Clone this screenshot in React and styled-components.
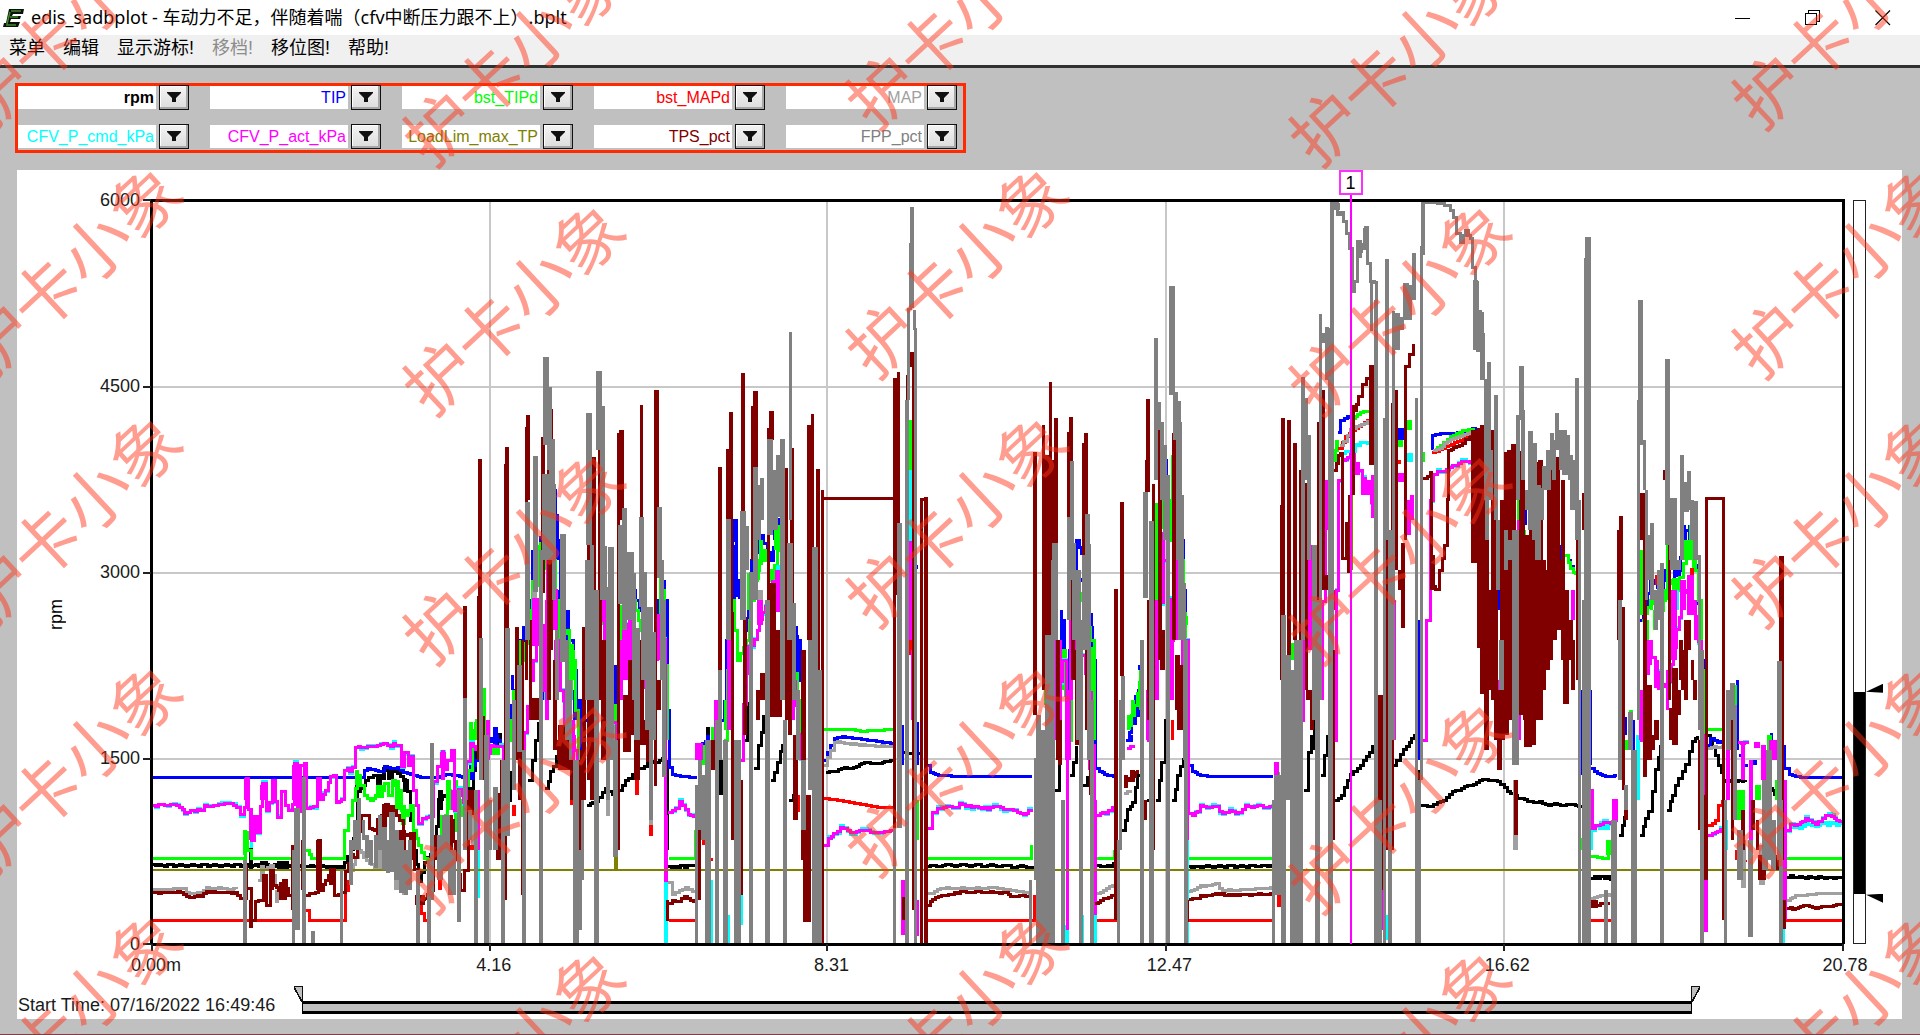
import React, { useState } from 'react'
import styled, { createGlobalStyle } from 'styled-components'

const cjk = '"Noto Sans CJK SC", sans-serif'

const GlobalStyle = createGlobalStyle`
  * {
    box-sizing: border-box;
  }
  body {
    margin: 0;
    background: #c0c0c0;
    font-family: "Liberation Sans", ${cjk};
  }
`

// plot space: x 151..1843, y 200..944
const LEFT = 151
const TOP = 200
const WIDTH = 1692
const HEIGHT = 744

const actLines =
  '152,805 170,803 182,808 184,811 200,811 204,806 230,804 236,808 240,812 244,808 246,778 248,810 251,840 254,815 257,830 260,805 262,785 266,810 269,800 272,778 275,800 277,818 281,790 285,805 288,810 292,805 294,765 297,812 300,765 304,762 306,810 313,805 317,778 320,800 325,790 330,775 333,775 336,803 341,800 344,770 352,768 355,748 360,745 370,747 380,744 390,745 398,745 401,765 404,750 408,765 411,758 413,790 418,822 422,817 429,818 433,780 437,765 441,755 444,770 447,760 451,748 454,810 458,790 463,800 466,760 470,745 475,748 480,744 485,760 490,745 500,747 503,760 504,830|520,760 524,730 530,680 536,640 540,690 547,560 552,590 556,640 560,690 568,720 574,750 579,850|590,720 600,600 605,640 612,720 616,780|620,600 626,650 632,660 640,680 650,700 657,620 661,640 665,820|668,812 675,808 679,802 685,808 690,816 696,820|740,760 746,650 754,640 762,610 770,600 778,580 784,620 792,680 800,760|824,845 828,840 833,832 840,828 850,830 870,832 893,830|928,828 932,812 940,808 955,806 962,804 990,808 1000,806 1010,810 1020,813 1031,812|1054,720 1062,660 1066,760 1071,620 1078,640 1088,690 1094,800|1097,815 1105,812 1115,805|1127,748 1133,745|1147,740 1156,640 1163,560 1170,640 1178,560 1184,640 1188,813|1188,813 1192,815 1200,806 1215,808 1222,812 1235,812 1245,806 1272,806 1276,765|1300,720 1306,600 1313,660 1318,700 1325,500|1333,740 1336,590 1338,480 1342,460 1350,455 1354,462 1358,470 1362,480 1368,490 1373,510|1422,740 1426,620 1430,500 1433,475 1440,470 1455,465 1472,459|1590,790 1592,826 1600,825 1610,822 1613,800 1616,822|1640,740 1648,640 1658,690 1668,680 1676,630 1684,590 1692,600 1698,640 1704,830|1708,835 1712,832 1720,830 1723,833|1738,742 1747,742|1786,830 1790,826 1797,823 1805,820 1815,822 1825,816 1842,820'

// lines: "x,y x,y|x,y ..."   bars: "x,width,top,bottom ..."
const channels = [
  {
    name: 'rpm',
    color: '#000000',
    bold: true,
    noise: 2,
    lines:
      '152,864 240,864 292,865 341,868 350,850 353,840 357,790 362,785 368,778 373,775 377,790 380,775 384,770 388,778 392,768 397,775 403,780 407,790 410,820 413,850 418,880 424,862 433,850 438,800 442,795 452,800 460,790 470,790 475,750 482,740|507,800 513,740 520,715|528,780 535,740 538,722|545,788 553,765 558,745|587,805 595,800 605,790 615,795 625,780 635,770 650,762 665,757|668,866 696,866|720,790 724,760|745,740 747,700|754,768 758,745 763,715|771,780 777,760 782,745|789,800 793,795|826,772 835,769 850,766 870,763 893,760|898,752 920,752|927,866 1032,865|1055,790 1059,760|1070,775 1076,745|1083,785 1090,765|1097,865 1116,864|1122,830 1127,810 1132,800 1137,775 1141,740|1147,800 1150,740|1156,800 1161,760 1165,720|1172,800 1177,775 1183,760|1188,866 1273,865|1304,790 1308,750 1314,720|1321,775 1327,735|1334,800 1341,795 1350,775 1360,765 1375,740|1393,765 1403,750 1414,733|1421,805 1430,806 1440,800 1455,790 1470,785 1485,779 1497,783 1507,790 1517,798 1530,800 1545,803 1575,804 1585,808|1591,878 1613,877|1619,835 1624,815|1640,835 1648,810 1655,770 1660,745|1667,810 1675,785 1685,765 1692,740 1697,735|1707,735 1712,745 1718,765 1723,780 1735,782 1745,782|1763,785 1783,800|1787,877 1842,877',
    bars: '251,4,848,870 283,12,861,870 264,8,861,870 357,4,780,800 384,4,767,780 392,4,768,778 405,4,778,792 440,5,790,810 452,5,790,810 500,4,733,745 520,3,710,730 667,3,760,850 708,4,727,740 720,5,760,795 734,4,740,780 1094,3,780,830 1150,3,740,800 1296,4,750,790 1315,4,700,750 1418,4,770,790',
  },
  {
    name: 'TIP',
    color: '#0000ff',
    noise: 0,
    lines:
      '152,777 360,777 364,770 367,768 375,770 381,771 384,766 390,768 397,767 403,772 410,774 420,777 436,777 445,774 455,775 462,777 470,770 475,760 480,750 494,735 500,745|506,720 513,690 520,640 530,600 537,555 547,500 552,490 557,540 562,640 570,640 576,700 580,780|586,720 592,640 600,590 606,640 614,690 616,740|620,610 632,590 642,620 650,660 658,600 664,600 667,710|667,710 669,767 672,774 680,776 697,777|699,745 705,740|722,720 729,560 734,520 736,580 744,630 751,560 760,535 770,560 779,520 786,600 796,640 803,720|824,760 827,752 830,745 834,738 842,736 855,738 870,740 893,743|927,765 930,772 938,775 960,776 1032,776|1054,680 1061,620 1066,720 1071,580 1076,540 1084,560 1092,660 1095,768|1095,768 1099,771 1107,775 1116,776|1126,740 1134,715 1141,665|1154,560 1162,460 1166,500|1172,480 1180,540 1188,690|1188,765 1192,771 1200,775 1210,776 1273,776|1338,432 1340,420 1347,416 1352,417|1431,448 1432,435 1440,433 1448,433 1460,432 1472,428 1478,435|1567,560 1573,572|1591,768 1597,773 1605,776 1617,775|1640,620 1650,580 1660,590 1668,560 1677,570 1685,530 1692,530 1698,600 1704,720|1706,745 1710,738 1717,742 1722,740|1739,755 1742,765 1748,765|1785,768 1789,774 1800,777 1842,777',
    bars: '472,6,750,780 495,5,727,745 508,3,710,740 512,3,675,690 520,3,640,680 533,4,550,580 545,4,664,700 552,3,490,530 557,3,537,560 559,3,590,620 568,4,610,640 575,4,690,720 578,3,700,770 615,3,665,740 631,4,587,600 659,3,600,610 664,3,580,600 665,3,612,710 708,4,735,745 724,3,700,720 734,3,545,600 736,3,572,597 751,3,560,570 760,5,534,545 776,6,520,540 779,3,518,540 797,3,635,700 802,3,690,720 902,3,725,765 916,3,565,569 917,3,722,765 1055,3,640,700 1061,3,610,635 1066,3,694,720 1076,4,550,570 1081,3,578,582 1091,3,613,660 1093,4,708,765 1131,3,735,742 1135,3,695,725 1140,4,665,670 1157,3,524,600 1162,4,466,490 1165,3,485,500 1182,3,540,584 1185,3,592,615 1187,3,683,760 1309,3,490,510 1330,4,445,460 1401,6,428,440 1418,3,620,760 1499,3,570,610 1509,3,560,590 1525,3,500,525 1536,3,540,580 1543,3,575,580 1561,3,545,560 1582,3,690,775 1590,3,690,765 1625,3,717,735 1633,3,720,760 1651,3,578,600 1674,3,530,580 1677,7,565,577 1684,4,525,540 1689,3,525,540 1698,3,590,605 1701,3,650,680 1704,4,700,740 1737,3,680,750 1755,4,760,765 1771,3,733,740 1784,3,745,770',
  },
  {
    name: 'bst_TIPd',
    color: '#00ff00',
    noise: 0,
    lines:
      '152,858 244,858 245,832 247,850 251,858 292,858|306,850 311,858 341,858 344,830 348,815 352,800 357,775 360,785 364,795 370,800 375,795 380,790 384,783 388,795 392,780 397,790 401,810 405,815 410,805 413,830 418,845 424,858 430,860 436,850 442,840 447,790 452,800 455,830 462,800 468,770 472,730 476,720 482,750|506,740 513,700 520,660 530,610 537,560 547,510 552,560 558,640 566,630 572,660 578,760|588,740 594,640 600,610 608,650 615,760|620,620 632,600 643,640 652,690 660,590 667,740|669,858 695,858 695,830|724,740 730,600 737,660 746,640 754,580 762,550 771,580 780,535 788,620 797,700 804,800|824,729 852,729 860,731 870,730 893,729|910,4 910,4|927,858 1031,858 1031,845|1056,720 1062,650 1067,740 1074,580 1082,600 1090,640 1094,740|1097,858 1114,858 1114,850|1128,725 1134,705 1142,670|1155,600 1163,490 1168,540 1173,460 1180,560 1188,720|1188,858 1272,858 1273,845|1332,460 1337,440|1352,418 1360,412 1370,410|1432,452 1440,445 1450,436 1462,430 1473,428|1565,555 1570,568 1575,575|1591,856 1605,858 1608,845 1612,830|1642,620 1650,600 1660,610 1668,580 1676,590 1686,550 1692,540 1698,600 1704,740|1707,729 1725,729|1786,858 1842,858',
    bars: '245,4,830,855 297,3,810,850 357,4,770,785 380,8,785,798 397,5,780,810 403,5,805,825 442,5,815,840 448,5,780,810 456,4,780,830 471,4,722,760 476,5,722,740 483,5,688,740 485,6,720,740 496,8,745,755 514,4,690,720 521,4,640,675 533,4,580,610 537,4,545,580 547,4,502,570 570,5,645,700 573,4,650,680 608,5,635,660 620,4,605,640 631,4,590,610 643,3,620,650 660,3,578,600 665,3,660,710 704,4,745,765 713,5,727,740 725,3,700,730 730,4,585,620 748,3,573,610 758,3,560,580 761,4,540,565 777,6,525,550 798,3,690,720 802,3,720,780 910,4,420,500 917,3,800,840 1045,3,680,705 1063,4,652,690 1066,3,720,740 1073,3,578,590 1091,3,647,700 1092,3,700,740 1141,5,670,710 1133,4,700,715 1129,4,715,730 1156,4,503,600 1163,4,487,520 1173,4,455,520 1186,3,616,625 1277,5,772,790 1292,3,643,660 1305,5,508,520 1309,3,500,530 1313,3,565,610 1337,4,440,450 1400,6,440,447 1409,6,420,430 1423,4,452,462 1510,3,580,610 1519,4,500,620 1524,3,530,545 1537,3,560,580 1543,3,580,600 1582,3,838,850 1608,5,840,855 1626,3,740,750 1631,4,710,730 1641,4,550,615 1647,4,620,645 1651,3,595,610 1655,4,610,630 1660,3,590,610 1667,3,545,600 1675,6,578,590 1686,6,540,560 1690,3,525,560 1694,4,545,570 1702,3,680,700 1735,3,685,710 1729,3,700,720 1741,8,790,820 1758,6,785,800 1764,4,800,820 1769,5,735,750 1776,3,780,800',
  },
  {
    name: 'bst_MAPd',
    color: '#ff0000',
    noise: 0,
    lines:
      '152,920 292,920|306,910 309,920 341,920 345,890 350,872|418,905 424,920 429,920|669,920 696,920|823,798 840,800 860,804 880,807 893,807|927,920 1033,920 1034,895|1097,920 1115,920 1115,898|1188,920 1273,920|1338,448 1345,436 1352,430 1370,418|1432,452 1445,446 1460,440 1473,432|1591,920 1612,920|1708,825 1715,820 1718,805 1722,800|1735,858 1745,862|1786,920 1842,920',
    bars: '246,3,890,900 302,3,845,890 440,4,860,890 472,5,845,850 498,4,845,855 514,4,805,816 556,3,670,700 572,4,780,805 637,4,780,795 651,4,825,836 656,3,690,710 703,3,830,845 710,6,858,861 798,3,795,812 911,4,640,655 1147,3,720,740 1172,3,720,740 1280,6,890,907 1398,6,460,464 1334,3,590,610 1656,3,575,585 1692,4,568,575 1737,4,850,860',
  },
  {
    name: 'MAP',
    color: '#a0a0a0',
    noise: 1,
    lines:
      '152,889 182,888 186,892 200,893 206,888 236,889|258,880 262,870 270,865 275,885 279,900|350,870 358,850 366,860 374,868 380,858 386,868|668,882 672,894 685,887 695,893|824,765 830,750 834,742 850,743 893,747|927,893 940,888 1000,887 1010,890 1032,893|1097,893 1115,884|1124,793 1130,790|1188,891 1200,886 1215,884 1222,890 1273,887|1340,445 1350,430 1370,419|1433,450 1450,440 1473,430|1591,898 1612,893|1708,748 1722,745|1787,900 1795,895 1842,892',
    bars: '262,5,865,880 277,4,890,903 379,5,850,870 396,5,860,890 404,5,870,895 473,5,800,845 534,5,590,610 608,4,790,816 651,4,780,825 760,5,590,610 1515,5,780,850 1557,5,430,450 1743,5,840,888 1762,6,845,885',
  },
  {
    name: 'CFV_P_cmd_kPa',
    color: '#00ffff',
    noise: 4,
    lines: actLines + '|1342,453 1352,448 1360,443 1370,444|1787,831 1805,826 1842,822',
    bars: '251,3,836,848 257,3,828,834 478,4,830,898 545,3,690,700 630,5,617,625 666,4,870,943 711,3,880,943 728,3,915,943 741,3,895,925 737,3,765,785 778,4,565,578 911,4,470,545 1042,3,900,925 1067,4,925,943 1082,3,915,943 1095,4,900,943 1183,3,635,670 1187,4,820,943 1322,3,495,520 1379,4,900,943 1386,4,915,940 1410,6,453,462 1591,3,828,850 1604,12,824,830 1638,4,735,800 1676,6,590,610 1726,3,820,850 1783,4,915,943',
  },
  {
    name: 'CFV_P_act_kPa',
    color: '#ff00ff',
    noise: 2,
    lines: actLines,
    bars: '246,4,778,800 251,4,810,840 262,5,785,800 295,6,765,800 304,3,762,800 443,4,750,780 455,8,790,810 478,3,790,850 488,4,720,760 520,6,720,735 535,7,598,646 547,4,600,720 553,6,540,630 556,4,640,700 566,6,690,730 573,4,720,760 578,4,790,859 588,3,700,760 602,6,680,700 605,4,595,650 612,4,670,720 620,5,640,700 626,8,630,680 632,8,620,670 650,4,680,710 659,5,614,660 666,4,815,882 699,8,743,760 716,4,700,770 729,4,640,730 737,4,780,860 747,4,645,675 760,6,600,625 773,4,580,620 779,8,570,612 793,4,650,720 822,3,850,930 910,4,541,640 912,3,650,720 904,6,880,935 917,4,900,936 1055,3,620,740 1060,4,640,730 1067,3,760,930 1071,4,620,700 1076,5,623,670 1089,3,670,770 1095,4,800,915 1120,3,740,800 1147,3,690,740 1157,4,600,700 1163,4,532,580 1172,4,620,700 1178,4,535,640 1183,4,610,720 1187,3,800,840 1276,5,762,775 1303,3,640,700 1310,4,545,650 1313,3,650,700 1326,4,480,530 1357,6,463,475 1366,10,480,495 1373,4,475,518 1380,5,890,930 1394,3,600,740 1400,10,473,482 1408,5,500,535 1412,4,495,520 1485,3,540,640 1498,3,680,735 1510,3,570,650 1519,4,520,740 1526,4,540,580 1536,3,590,650 1542,3,600,620 1561,3,580,620 1573,4,590,620 1586,3,700,770 1621,6,740,745 1634,4,750,840 1641,4,690,740 1649,6,645,665 1656,5,660,688 1667,3,670,710 1674,6,590,660 1683,6,580,610 1690,7,575,615 1696,5,615,640 1704,4,800,880 1706,4,880,932 1728,4,740,800 1743,4,742,780 1751,4,760,855 1757,6,742,748 1763,5,745,780 1774,10,740,760 1785,4,780,920',
  },
  {
    name: 'LoadLim_max_TP',
    color: '#808000',
    noise: 0,
    lines: '152,870 1842,870',
    bars: '616,4,857,870 1351,3,495,570',
  },
  {
    name: 'TPS_pct',
    color: '#800000',
    noise: 1,
    lines:
      '152,892 180,892 186,896 200,896 206,892 234,892 240,897 244,896|248,888 251,920 255,900 260,900 263,875 266,905 270,870 273,885 278,890 283,880 288,895 292,895|306,895 315,892 318,840 320,890 325,880 331,868 334,895 341,893 345,870 350,855 353,858 357,830 361,815 366,815 369,828 374,830 377,820 381,815 385,805 388,815 393,810 399,820 403,835 410,833 414,870 418,900 424,898 430,890 433,850 439,840 445,850 450,820 455,860 460,890 464,870 468,800|668,903 672,900 678,902 684,896 690,900 695,902|927,905 935,896 960,892 1005,892 1010,896 1031,896|1095,903 1100,900 1108,897 1114,893|1126,780 1132,775 1137,770|1189,899 1200,896 1215,894 1240,894 1273,893|1333,470 1338,455 1340,452 1342,558 1346,523 1348,573|1353,410 1358,396 1362,385 1366,377 1370,370|1405,540 1405,366 1409,355 1413,343|1423,478 1430,472 1431,585 1435,590 1439,570 1444,545 1447,500 1448,450 1453,448 1462,443 1472,433 1474,560|1592,906 1600,904 1610,903|1787,908 1795,908 1803,905 1815,907 1830,905 1842,904',
    bars: '858,72,497,500 923,5,498,501 1714,18,497,500 1706,3,497,880 1723,3,497,920 246,4,865,900 251,4,900,928 265,4,875,900 272,4,872,890 283,8,882,900 292,3,845,910 297,5,890,910 303,4,840,890 318,4,840,890 331,4,868,885 378,5,818,835 384,5,804,830 392,6,805,835 402,8,830,855 411,5,832,860 420,10,895,905 434,6,835,860 450,5,815,860 465,4,606,700 472,8,790,815 480,4,459,638 478,3,596,760 483,4,716,780 499,6,793,860 502,4,760,860 507,4,447,628 505,3,464,900 517,4,627,760 520,4,740,800 522,3,640,895 528,4,415,500 526,3,427,680 530,3,620,720 535,8,698,720 543,4,437,593 551,3,409,650 549,4,464,700 555,4,660,750 559,5,740,760 564,12,725,770 572,4,760,800 579,4,760,860 582,4,750,830 584,4,627,800 589,5,540,780 593,6,457,640 592,4,640,800 600,4,442,700 604,6,640,760 610,6,660,740 618,3,433,850 621,5,430,520 627,8,695,752 631,6,660,735 637,6,720,780 641,3,405,600 642,4,640,745 645,6,720,745 648,4,730,762 656,5,390,560 655,3,560,786 658,5,680,710 667,3,900,921 699,3,800,900 702,4,795,820 713,6,740,770 719,3,498,660 720,4,467,670 728,4,449,519 727,3,475,520 731,4,412,620 732,3,612,840 742,3,405,620 743,4,373,511 741,3,780,895 745,4,617,735 753,4,406,560 755,5,391,470 758,4,690,720 762,5,673,700 768,3,428,700 771,5,411,440 773,6,583,717 777,10,630,717 786,3,468,720 792,4,448,620 790,4,565,735 795,5,735,820 803,5,650,860 807,8,795,922 809,4,425,640 812,3,414,670 818,4,469,670 822,3,490,943 895,4,378,595 898,3,372,523 894,3,500,850 906,3,558,943 912,4,352,367 913,3,367,910 907,3,375,400 921,3,498,943 926,4,497,943 903,3,897,920 1035,4,452,715 1043,3,425,690 1050,3,382,640 1048,6,455,635 1053,5,460,560 1056,4,418,543 1058,4,640,760 1060,4,720,765 1068,3,432,517 1071,4,417,476 1073,4,580,680 1077,5,650,745 1083,3,443,555 1086,4,433,514 1087,4,593,730 1090,3,720,795 1042,3,810,910 1049,3,700,900 1116,4,589,920 1122,4,502,676 1126,4,775,788 1132,5,770,782 1146,3,460,492 1148,4,399,492 1145,3,800,820 1148,3,600,720 1153,3,484,850 1158,4,417,440 1160,4,435,660 1162,5,630,670 1174,4,433,640 1177,5,655,710 1180,6,665,730 1187,3,900,922 1281,3,505,680 1283,4,418,615 1289,4,420,655 1295,4,443,640 1300,3,470,650 1306,3,483,690 1308,4,690,700 1312,4,690,730 1318,3,422,750 1323,4,390,590 1326,4,575,590 1333,3,650,840 1349,3,495,573 1353,3,405,495 1372,6,365,465 1375,3,365,686 1380,5,695,890 1386,3,515,850 1392,3,403,850 1396,4,390,570 1400,5,570,590 1403,4,543,628 1416,3,830,927 1432,5,555,590 1475,8,430,563 1480,6,428,648 1482,5,425,694 1486,5,480,750 1490,6,590,690 1493,5,430,700 1496,4,540,740 1499,5,690,770 1502,5,500,740 1506,5,452,735 1509,5,450,720 1513,5,444,700 1516,4,780,835 1522,6,451,715 1525,5,600,720 1528,8,535,747 1532,7,530,745 1536,6,462,720 1540,5,460,720 1543,6,560,690 1547,5,570,670 1550,6,457,660 1554,5,460,640 1557,5,457,630 1560,5,560,630 1563,4,480,660 1566,6,590,704 1570,5,620,660 1573,4,640,690 1577,3,500,680 1583,3,493,530 1594,8,900,908 1618,3,530,640 1621,4,516,600 1623,3,607,790 1626,4,790,820 1634,3,840,870 1642,4,493,540 1644,3,493,620 1645,4,600,777 1649,5,685,760 1652,6,735,750 1656,5,720,740 1664,3,470,480 1669,3,506,700 1672,6,708,740 1675,6,668,745 1679,4,690,715 1681,4,640,680 1684,6,650,690 1686,4,620,700 1689,4,620,650 1692,3,660,680 1695,4,680,700 1699,3,740,830 1703,4,795,880 1732,3,718,840 1743,4,810,850 1753,4,800,830 1757,3,820,850 1762,8,855,880 1768,4,785,830 1777,5,855,870 1781,5,556,860 1784,4,900,929',
  },
  {
    name: 'FPP_pct',
    color: '#808080',
    noise: 2,
    lines:
      '1334,203 1337,212 1340,210 1343,220 1346,233 1349,248 1352,290 1354,280 1357,250 1361,245 1365,228 1367,262 1370,280 1374,283 1376,305|1424,202 1440,202 1447,206 1453,218 1456,233 1460,240 1465,232 1470,238 1472,265 1475,280 1477,350 1479,315 1482,350',
    bars: '245,4,860,943 293,3,850,943 297,6,808,930 304,4,777,943 313,4,931,943 341,3,870,943 351,4,840,885 355,4,820,850 359,4,798,850 363,3,820,840 367,4,835,858 371,4,840,865 376,4,835,868 380,4,815,850 384,5,827,870 388,4,840,873 392,6,812,872 396,5,830,880 401,5,840,893 406,4,850,895 410,4,840,890 418,4,870,943 429,4,860,943 432,4,743,900 440,6,835,880 446,8,815,870 452,8,850,895 459,4,790,922 465,4,698,850 470,4,810,840 476,4,790,943 481,4,638,780 486,5,735,943 490,3,800,850 495,5,787,850 503,4,760,943 507,5,628,836 514,4,700,790 519,5,665,752 524,4,750,943 527,5,502,640 535,5,456,592 541,4,550,943 546,6,357,445 549,5,387,470 545,7,474,560 552,6,439,560 554,4,484,600 557,4,630,700 563,6,534,662 567,4,640,740 570,3,680,760 576,6,760,943 580,4,850,930 582,3,800,880 587,5,560,700 589,6,413,545 592,4,545,700 596,5,590,943 599,6,371,450 602,5,406,600 605,4,546,600 608,4,587,800 611,6,547,760 615,5,740,857 620,4,525,604 624,5,508,630 630,8,552,620 634,4,573,700 637,6,628,740 641,5,517,607 644,6,572,680 648,6,607,730 651,4,607,820 653,5,632,740 659,5,507,578 662,4,560,680 664,4,600,777 696,3,785,943 700,4,760,830 703,5,775,840 708,6,740,943 717,4,720,943 720,4,670,760 725,5,740,943 728,5,519,640 737,7,740,943 743,6,511,620 747,4,526,570 751,4,572,943 755,5,467,600 758,5,485,540 762,4,478,520 767,5,600,943 770,6,439,535 775,6,470,530 779,6,455,517 782,5,439,700 785,4,720,943 790,3,332,520 790,6,543,640 794,4,603,700 798,4,690,760 803,5,760,830 810,4,640,790 815,6,547,943 818,8,670,943 894,3,828,943 899,5,523,828 912,4,207,308 910,3,243,310 908,3,308,400 907,4,400,943 914,3,310,330 915,3,328,943 1030,3,880,943 1036,5,758,880 1038,5,715,943 1043,5,730,943 1048,6,635,943 1053,4,560,943 1055,6,543,640 1063,4,800,943 1069,4,517,620 1072,4,461,580 1074,4,543,640 1078,5,570,740 1081,4,620,943 1084,5,555,650 1087,5,514,600 1089,4,544,760 1092,4,700,943 1118,3,840,943 1120,3,700,850 1123,4,676,760 1142,4,640,943 1145,5,492,598 1151,5,521,943 1156,4,338,480 1159,3,402,430 1162,4,422,500 1165,4,445,540 1168,4,475,943 1172,6,286,395 1175,5,392,440 1178,5,401,560 1180,4,422,640 1182,3,495,640 1184,3,583,760 1186,4,640,943 1273,3,800,943 1278,8,775,895 1283,5,615,943 1288,5,655,800 1292,4,670,943 1296,5,640,943 1300,5,640,943 1303,4,377,640 1306,4,398,480 1309,4,435,560 1314,5,545,720 1317,5,600,943 1320,3,314,700 1324,6,333,343 1327,4,327,380 1330,5,328,943 1332,4,202,650 1337,6,203,210 1359,6,240,258 1365,5,228,250 1371,3,280,331 1376,4,300,943 1379,5,800,943 1384,3,418,943 1387,4,259,540 1390,4,530,943 1393,3,311,740 1397,5,313,350 1402,4,317,330 1406,6,283,320 1409,5,285,320 1414,4,253,300 1416,3,398,943 1418,5,780,943 1421,3,246,780 1423,4,201,255 1475,5,280,350 1479,5,310,350 1482,5,333,380 1486,5,379,500 1489,4,362,500 1491,4,450,500 1496,4,395,520 1487,4,500,540 1498,4,520,590 1501,5,640,690 1506,4,530,570 1511,6,540,560 1515,7,530,765 1518,4,415,500 1521,5,366,420 1523,4,410,480 1527,5,490,510 1530,5,431,530 1534,5,443,540 1538,6,485,560 1541,6,488,520 1545,6,466,490 1548,5,450,490 1552,4,433,470 1554,4,440,480 1557,4,413,450 1561,5,430,470 1564,5,430,475 1567,5,435,475 1570,5,455,480 1573,6,460,510 1577,4,378,540 1579,3,500,943 1583,3,600,943 1587,5,237,530 1589,4,237,943 1585,3,258,943 1606,4,890,943 1614,6,820,943 1620,4,600,780 1626,4,785,810 1630,5,712,750 1634,6,750,943 1638,3,400,720 1640,5,300,445 1644,3,440,490 1646,3,490,600 1649,5,535,580 1652,4,523,600 1656,4,590,630 1659,4,570,620 1662,4,563,943 1667,5,359,545 1670,3,500,560 1673,7,498,570 1678,5,560,570 1682,4,455,560 1686,6,482,512 1689,4,471,510 1692,4,500,540 1695,5,501,560 1699,3,555,730 1702,4,650,943 1725,3,800,943 1728,5,690,750 1732,5,683,720 1735,4,705,820 1740,6,830,880 1750,5,840,937 1765,6,780,870 1769,6,750,860 1773,5,820,870 1779,5,661,860 1781,4,800,943',
  },
]

const jitter = (x) => Math.sin(x * 12.9898) + Math.sin(x * 4.1414)

// resample a polyline in 3px steps with a bit of sensor noise
function linePath(lines, noise) {
  return lines
    .split('|')
    .map((line) => {
      const pts = line.split(' ').map((p) => p.split(',').map(Number))
      let d = `M${pts[0][0]} ${pts[0][1]}`
      for (let i = 1; i < pts.length; i++) {
        const [x0, y0] = pts[i - 1]
        const [x1, y1] = pts[i]
        const steps = Math.max(1, Math.round((x1 - x0) / 3))
        for (let s = 1; s <= steps; s++) {
          const x = x0 + ((x1 - x0) * s) / steps
          const y = y0 + ((y1 - y0) * s) / steps + jitter(x) * noise * 0.5
          d += `H${Math.round(x)}V${Math.round(y)}`
        }
      }
      return d
    })
    .join('')
}

function barPath(bars) {
  return bars
    .split(' ')
    .map((b) => {
      const [x, w, top, bottom] = b.split(',').map(Number)
      return `M${x - Math.floor(w / 2)} ${top}h${w}V${bottom}h${-w}z`
    })
    .join('')
}

const Page = styled.div`
  position: relative;
  display: flex;
  flex-direction: column;
  min-height: 100vh;
  overflow: hidden;
  background: #c0c0c0;
  border-bottom: 1px solid #7a4048;
`

const TitleBar = styled.header`
  display: flex;
  align-items: center;
  height: 35px;
  padding: 0 2px 0 3px;
  background: #fff;
`

const Title = styled.h1`
  flex: 1;
  margin: 0 0 0 6px;
  font: 400 18px/35px "Noto Sans", ${cjk};
  color: #000;
  white-space: nowrap;
`

const WindowButton = styled.button`
  display: flex;
  align-items: center;
  justify-content: center;
  width: 70px;
  height: 33px;
  padding: 0;
  border: 0;
  background: none;
`

const MenuBar = styled.nav`
  display: flex;
  gap: 18px;
  height: 33px;
  padding: 0 9px;
  background: #f0f0f0;
  border-bottom: 3px solid #2f3230;
`

const MenuItem = styled.button`
  padding: 0 0 4px;
  border: 0;
  background: none;
  color: ${(props) => (props.disabled ? '#8c8c8c' : '#000')};
  font: 400 18px/26px "Liberation Sans", ${cjk};
`

const ChannelBar = styled.section`
  display: grid;
  grid-template-columns: repeat(5, 171px);
  grid-auto-rows: 25px;
  gap: 14px 21px;
  align-self: flex-start;
  margin: 15px 0 0 15px;
  padding: 0 6px 0 0;
  border: 3px solid #ff2a00;
`

const Channel = styled.label`
  position: relative;
  display: block;
  height: 25px;
  margin-top: -1px;
`

const ChannelSelect = styled.select`
  appearance: none;
  width: 100%;
  height: 25px;
  padding: 0 35px 0 0;
  border: 0;
  border-radius: 0;
  background: linear-gradient(#fff, #fff) no-repeat 0 1px / 138px 23px;
  color: ${(props) => props.$color};
  font: ${(props) => (props.$bold ? 700 : 400)} 16px/24px "Liberation Sans", sans-serif;
  text-align: right;
  text-align-last: right;
`

const DropArrow = styled.span`
  position: absolute;
  top: 0;
  right: 0;
  display: flex;
  align-items: center;
  justify-content: center;
  width: 30px;
  height: 25px;
  border: 1px solid #111;
  box-shadow: inset -2px -2px 0 #a8a8a8, inset 1px 1px 0 #fff;
  background: linear-gradient(#f4f4f4, #dcdcdc);
  pointer-events: none;
`

const Sheet = styled.main`
  flex: 1;
  display: grid;
  grid-template-columns: 134px 1fr 59px;
  grid-template-rows: 30px 1fr 42px 33px;
  margin: 17px 18px 15px 17px;
  background: #fff;
`

const AxisY = styled.div`
  grid-area: 2 / 1;
  display: flex;
  align-items: stretch;
  justify-content: space-between;
  padding: 0 11px 0 28px;
`

const AxisName = styled.span`
  align-self: center;
  margin-top: 84px;
  writing-mode: vertical-rl;
  transform: rotate(180deg);
  font-size: 18px;
  line-height: 22px;
`

const TicksY = styled.div`
  display: flex;
  flex-direction: column;
  justify-content: space-between;
  margin: -10px 0;
  font-size: 18px;
  line-height: 20px;
  text-align: right;
  color: #1a1a1a;
`

const TicksX = styled.div`
  grid-area: 3 / 2;
  display: flex;
  justify-content: space-between;
  margin: 11px -32px 0 -25px;
  font-size: 18px;
  line-height: 20px;
  color: #1a1a1a;
  span {
    width: 60px;
    text-align: center;
  }
`

const PlotArea = styled.div`
  grid-area: 2 / 2;
  position: relative;
  min-height: 300px;
`

const PlotSvg = styled.svg`
  position: absolute;
  inset: 0;
  width: 100%;
  height: 100%;
  overflow: visible;
`

const CursorFlag = styled.span`
  position: absolute;
  top: -30px;
  left: 70.9%;
  width: 24px;
  height: 25px;
  transform: translateX(-50%);
  border: 2px solid #ff30ff;
  background: #fff;
  font-size: 18px;
  line-height: 22px;
  text-align: center;
`

const Scale = styled.div`
  grid-area: 2 / 3;
  position: relative;
  margin-left: 10px;
`

const ScaleTrack = styled.div`
  position: relative;
  width: 13px;
  height: 100%;
  border: 1px solid #222;
`

const ScaleFill = styled.div`
  position: absolute;
  left: 0;
  right: 0;
  background: #000;
`

const ScaleInput = styled.input`
  position: absolute;
  top: 0;
  left: 13px;
  width: 17px;
  height: 100%;
  margin: 0;
  appearance: none;
  background: none;
  writing-mode: vertical-lr;
  direction: rtl;
  pointer-events: none;
  &::-webkit-slider-thumb {
    appearance: none;
    width: 17px;
    height: 9px;
    background: #000;
    pointer-events: auto;
    clip-path: ${(props) =>
      props.$edge === 'top'
        ? 'polygon(0 90%, 100% 0, 100% 100%)'
        : 'polygon(0 10%, 100% 0, 100% 100%)'};
  }
`

const Footer = styled.footer`
  grid-area: 4 / 1 / 5 / 4;
  display: flex;
  align-items: flex-start;
  padding: 0 202px 0 1px;
`

const StartTime = styled.span`
  width: 276px;
  padding-top: 9px;
  font-size: 18px;
  line-height: 20px;
  white-space: nowrap;
  color: #1a1a1a;
`

const Range = styled.div`
  position: relative;
  flex: 1;
  padding: 15px 8px 0;
`

const RangeBar = styled.div`
  height: 13px;
  border: solid #000;
  border-width: 3px 1px;
  background: #c0c0c0;
`

const RangeInput = styled.input`
  position: absolute;
  top: 0;
  left: 0;
  width: 100%;
  height: 16px;
  margin: 0;
  appearance: none;
  background: none;
  pointer-events: none;
  &::-webkit-slider-thumb {
    appearance: none;
    width: 9px;
    height: 16px;
    pointer-events: auto;
    background: linear-gradient(
      to top ${(props) => props.$side},
      transparent 44%,
      #111 44%,
      #111 56%,
      #c0c0c0 56%
    );
    border: solid #111;
    border-width: ${(props) => (props.$side === 'right' ? '1px 1px 0 0' : '1px 0 0 1px')};
  }
`

const Watermark = styled.svg`
  position: absolute;
  inset: 0;
  width: 100%;
  height: 100%;
  pointer-events: none;
  text {
    font: 400 68px "Noto Sans CJK SC", sans-serif;
    fill: rgba(255, 52, 22, 0.48);
    text-anchor: middle;
  }
`

const Logo = () => (
  <svg width="22" height="20" viewBox="0 0 22 20" aria-hidden="true">
    <path d="M6 1H21L20 6H10L9 8H18L17 11H8L7 14H17L15 19H0L1 15H3Z" fill="#0b120b" />
    <path d="M8 3H18M7 4L4 16M7 9H15M3 17H13" stroke="#3f8a2c" strokeWidth="1.5" fill="none" />
  </svg>
)

const Plot = () => (
  <PlotArea>
    <PlotSvg
      viewBox={`${LEFT} ${TOP} ${WIDTH} ${HEIGHT}`}
      preserveAspectRatio="none"
      shapeRendering="crispEdges"
      role="img"
      aria-label="rpm"
    >
      <path
        d="M490 200V944M827 200V944M1166 200V944M1504 200V944M151 387H1843M151 573H1843M151 759H1843"
        stroke="#c8c8c8"
        strokeWidth="2"
      />
      <path d="M151 944H1843" stroke="#000" strokeWidth="3" />
      {channels.map((c) => (
        <g key={c.name}>
          <path
            d={linePath(c.lines, c.noise)}
            fill="none"
            stroke={c.color}
            strokeWidth={c.name === 'LoadLim_max_TP' ? 2 : 3}
          />
          <path d={barPath(c.bars)} fill={c.color} />
        </g>
      ))}
      <path d="M151 200H1843V944M151 200V944" fill="none" stroke="#000" strokeWidth="3" />
      <path
        d="M143 200H151M143 387H151M143 573H151M143 759H151M143 944H151M152 944V951M490 944V951M827 944V951M1166 944V951M1504 944V951M1843 944V951"
        stroke="#222"
        strokeWidth="2"
      />
      <path d="M1351 195V944" stroke="#ff00ff" strokeWidth="2" />
    </PlotSvg>
    <CursorFlag>1</CursorFlag>
  </PlotArea>
)

const ScaleSlider = () => {
  const [low, setLow] = useState(56)
  const [high, setHigh] = useState(342)
  return (
    <Scale>
      <ScaleTrack>
        <ScaleFill style={{ top: `${100 - high / 10.1}%`, bottom: `${low / 8.5}%` }} />
      </ScaleTrack>
      <ScaleInput
        type="range"
        max="1000"
        aria-label="上限"
        $edge="top"
        value={high}
        onChange={(e) => setHigh(Number(e.target.value))}
      />
      <ScaleInput
        type="range"
        max="1000"
        aria-label="下限"
        $edge="bottom"
        value={low}
        onChange={(e) => setLow(Number(e.target.value))}
      />
    </Scale>
  )
}

const Watermarks = () => {
  const marks = []
  for (let col = -1; col < 4; col++) {
    for (let row = -1; row < 4; row++) {
      marks.push([514 + col * 443, 308 + row * 249 - (col % 2 ? 37 : 0)])
    }
  }
  return (
    <Watermark aria-hidden="true">
      {marks.map(([x, y]) => (
        <text key={`${x}-${y}`} transform={`translate(${x} ${y}) rotate(-43)`} dy="25">
          护卡小象
        </text>
      ))}
    </Watermark>
  )
}

const App = () => {
  return (
    <Page>
      <GlobalStyle />
      <TitleBar>
        <Logo />
        <Title>edis_sadbplot - 车动力不足，伴随着喘（cfv中断压力跟不上）.bplt</Title>
        <WindowButton aria-label="最小化">
          <svg width="16" height="16" viewBox="0 0 16 16" shapeRendering="crispEdges">
            <path d="M0 8.5H15" stroke="#000" />
          </svg>
        </WindowButton>
        <WindowButton aria-label="还原">
          <svg width="16" height="16" viewBox="0 0 16 16" shapeRendering="crispEdges">
            <path d="M.5 3.5H11.5V14.5H.5ZM3.5 3V.5H14.5V11.5H12" stroke="#000" fill="none" />
          </svg>
        </WindowButton>
        <WindowButton aria-label="关闭">
          <svg width="16" height="16" viewBox="0 0 16 16">
            <path d="M.5 .5L15 15M15 .5L.5 15" stroke="#000" strokeWidth="1.2" />
          </svg>
        </WindowButton>
      </TitleBar>
      <MenuBar>
        <MenuItem>菜单</MenuItem>
        <MenuItem>编辑</MenuItem>
        <MenuItem>显示游标!</MenuItem>
        <MenuItem disabled>移档!</MenuItem>
        <MenuItem>移位图!</MenuItem>
        <MenuItem>帮助!</MenuItem>
      </MenuBar>
      <ChannelBar>
        {channels.map((c) => (
          <Channel key={c.name}>
            <ChannelSelect
              $color={c.color}
              $bold={c.bold}
              defaultValue={c.name}
              aria-label={c.name}
            >
              <option>{c.name}</option>
            </ChannelSelect>
            <DropArrow>
              <svg width="14" height="11" viewBox="0 0 14 11">
                <path d="M0 0H14V1L9 6V10H5V6L0 1Z" fill="#111" />
              </svg>
            </DropArrow>
          </Channel>
        ))}
      </ChannelBar>
      <Sheet>
        <AxisY>
          <AxisName>rpm</AxisName>
          <TicksY>
            <span>6000</span>
            <span>4500</span>
            <span>3000</span>
            <span>1500</span>
            <span>0</span>
          </TicksY>
        </AxisY>
        <Plot />
        <ScaleSlider />
        <TicksX>
          <span>0.00m</span>
          <span>4.16</span>
          <span>8.31</span>
          <span>12.47</span>
          <span>16.62</span>
          <span>20.78</span>
        </TicksX>
        <Footer>
          <StartTime>Start Time: 07/16/2022 16:49:46</StartTime>
          <Range>
            <RangeBar />
            <RangeInput type="range" aria-label="起点" defaultValue="0" $side="right" />
            <RangeInput type="range" aria-label="终点" defaultValue="100" $side="left" />
          </Range>
        </Footer>
      </Sheet>
      <Watermarks />
    </Page>
  )
}

export default App
